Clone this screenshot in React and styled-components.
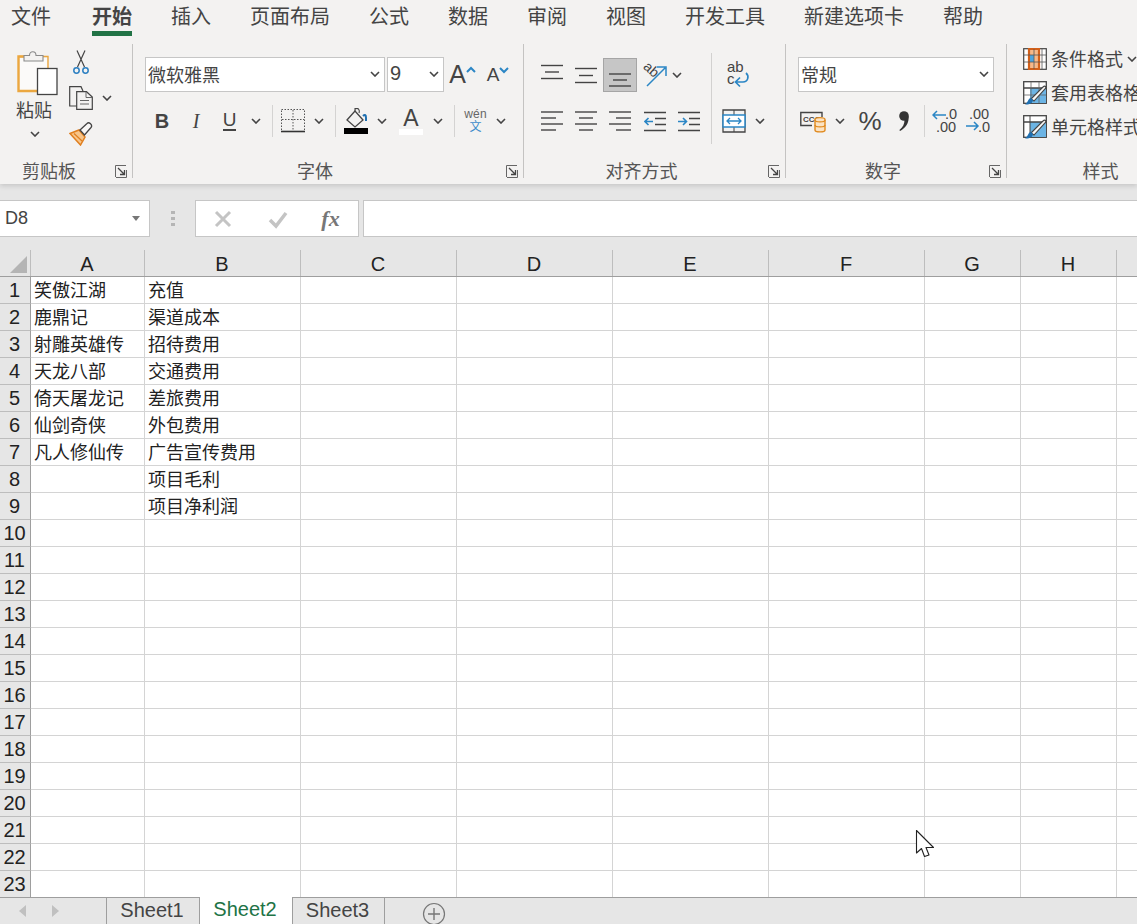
import React from "react";
import styled, { createGlobalStyle } from "styled-components";

const Global = createGlobalStyle`
  html, body { margin: 0; padding: 0; background: #fff; }
  #root { width: 1137px; height: 924px; overflow: hidden; }
`;
const CJK = `"Noto Sans CJK SC", "Noto Sans", sans-serif`;
const LAT = `"Liberation Sans", "Noto Sans CJK SC", sans-serif`;

const Page = styled.div`
  position: relative; width: 1137px; height: 924px; overflow: hidden;
  display: flex; flex-direction: column; background: #e6e6e6; font-family: ${CJK}; color: #444;
`;
const Ribbon = styled.header`
  height: 184px; flex: none; background: #f3f2f1; position: relative; z-index: 2;
  box-shadow: 0 2px 5px rgba(0,0,0,.14);
`;
const TabBar = styled.nav`display: flex; gap: 39px; padding-left: 11px; height: 36px; margin-bottom: 8px;`;
const Tab = styled.div`
  font-size: 20px; line-height: 31px; height: 31px; border-bottom: 5px solid ${p => p.$active ? "#217346" : "transparent"};
  font-weight: ${p => p.$active ? 700 : 400}; color: #444; white-space: nowrap;
  margin-left: ${p => p.$active ? 2 : 0}px;
`;
const Groups = styled.div`display: flex; align-items: flex-start;`;
const Divider = styled.div`width: 1px; height: 134px; background: #c4c3c2; flex: none;`;
const Group = styled.section`
  width: ${p => p.$w}px; height: 134px; flex: none; display: flex; flex-direction: column; position: relative;
`;
const Body = styled.div`flex: 1; min-height: 0; display: flex; padding: ${p => p.$pad || "13px 0 0 12px"};`;
const Rows = styled.div`display: flex; flex-direction: column; gap: 12px;`;
const Row = styled.div`display: flex; align-items: center; height: ${p => p.$h || 35}px;`;
const Footer = styled.footer`
  display: flex; align-items: center; height: 24px; margin-bottom: -5px; padding-right: 5px; flex: none;
`;
const GroupLabel = styled.div`
  flex: 1; text-align: center; font-size: 18px; line-height: 22px; height: 24px; color: #555;
  margin-right: ${p => p.$mr ?? 9}px; padding-left: ${p => p.$pl || 0}px;
`;
const SelectBox = styled.div`
  width: ${p => p.$w}px; height: 35px; box-sizing: border-box; background: #fff; border: 1px solid #c6c6c6;
  display: flex; align-items: center; justify-content: space-between; padding: 0 4px 2px 2px; margin-right: ${p => p.$mr || 0}px;
  font-size: ${p => p.$lat ? 20 : 18}px; font-family: ${p => p.$lat ? LAT : CJK}; color: #444; flex: none;
`;
const Tool = styled.div`
  width: ${p => p.$w}px; height: 34px; flex: none; display: flex; align-items: center; justify-content: center;
  color: #444; font-family: ${LAT}; font-size: 20px;
`;
const HighTool = styled(Tool)`
  background: #c6c6c6; border: 1px solid #a5a5a5; box-sizing: border-box; height: 34px;
`;
const BoldMark = styled.span`font-weight: 700;`;
const ItalicMark = styled.span`font-family: "Liberation Serif", serif; font-style: italic;`;
const UnderMark = styled.span`border-bottom: 2px solid #444; line-height: 18px; font-size: 19px;`;
const Grow = styled.span`font-size: ${p => p.$s}px; line-height: 1; color: #444; font-family: ${LAT};`;
const ToolSep = styled.div`
  width: 1px; height: 32px; background: #d4d3d2; margin-left: ${p => p.$ml}px; flex: none;
`;
const TallSep = styled.div`width: 1px; height: 91px; margin: -4px 0 0 5px; background: #d2d1d0; flex: none;`;
const PhoneticBox = styled.div`display: flex; flex-direction: column; align-items: center; line-height: 13px;`;
const WenTop = styled.span`font-size: 12px; color: #666; font-family: ${LAT}; letter-spacing: .2px;`;
const WenBot = styled.span`font-size: 12px; color: #3c8ccb;`;
const ColorA = styled.div`display: flex; flex-direction: column; align-items: center; width: 24px;`;
const ColorGlyph = styled.span`font-size: 23px; line-height: 22px; font-family: ${LAT}; color: #444;`;
const ColorBar = styled.span`width: 24px; height: 6px; background: ${p => p.$c};`;
const PasteCol = styled.div`width: 42px; margin-left: 14px; display: flex; flex-direction: column; align-items: center; flex: none;`;
const PasteText = styled.div`font-size: 18px; line-height: 24px; margin: 1px 2px 0 0; color: #444; white-space: nowrap;`;
const PasteChevron = styled.div`margin-top: 10px; height: 8px; display: flex;`;
const SmallCol = styled.div`margin-left: 13px; display: flex; flex-direction: column; gap: 12px;`;
const SmallRow = styled.div`display: flex; align-items: center; height: 24px;`;
const ChevGap = styled.div`display: flex; margin-left: 9px;`;
const StyleRow = styled.div`display: flex; align-items: center; height: 34px; gap: 4px; font-size: 18px; line-height: 32px; color: #444; white-space: nowrap;`;
const StyleText = styled.span`margin-top: -2px;`;
const StyleRows = styled.div`display: flex; flex-direction: column; margin-top: -2px;`;
const RightBlock = styled.div`display: flex; flex-direction: column; gap: 12px; padding-left: 13px;`;
const WrapRow = styled(Row)`margin-left: 1px;`;
const MergeRow = styled(Row)`margin-left: -3px;`;

const FormulaBar = styled.div`
  height: 66px; flex: none; background: #e6e6e6; display: flex; align-items: flex-start; padding-top: 16px; box-sizing: border-box;
`;
const NameBox = styled.div`
  width: 150px; height: 37px; box-sizing: border-box; background: #fff; border: 1px solid #c6c6c6; border-left: 0;
  display: flex; align-items: center; justify-content: space-between; padding: 0 9px 0 5px; font: 18px ${LAT}; color: #444; flex: none;
`;
const Grip = styled.div`width: 45px; display: flex; justify-content: center; align-items: center; height: 37px; flex: none;`;
const FxBox = styled.div`
  width: 164px; height: 37px; box-sizing: border-box; background: #fff; border: 1px solid #c6c6c6;
  display: flex; align-items: center; flex: none;
`;
const FxSlot = styled.div`width: ${p => p.$w}px; display: flex; justify-content: center; flex: none;`;
const FxText = styled.span`font: italic 700 22px "Liberation Serif", serif; color: #777;`;
const FormulaInput = styled.div`flex: 1; height: 37px; margin-left: 4px; box-sizing: border-box; background: #fff; border: 1px solid #c6c6c6; border-right: 0;`;

const Sheet = styled.div`flex: 1; min-height: 0; background: #fff; display: flex; flex-direction: column; overflow: hidden;`;
const HeaderRow = styled.div`display: flex; height: 27px; flex: none; background: #e6e6e6; border-bottom: 1px solid #9e9e9e; box-sizing: border-box;`;
const Corner = styled.div`width: 31px; flex: none; box-sizing: border-box; border-right: 1px solid #bdbdbd; display: flex; align-items: flex-end; padding: 0 0 3px 10px;`;
const ColHead = styled.div`
  width: ${p => p.$w}px; flex: none; box-sizing: border-box; border-right: 1px solid #bdbdbd; text-align: center;
  font: 20px/29px ${LAT}; color: #222; padding-right: 1px;
`;
const DataRow = styled.div`display: flex; height: 27px; flex: none;`;
const RowHead = styled.div`
  width: 31px; flex: none; box-sizing: border-box; background: #e6e6e6; border-right: 1px solid #9e9e9e; border-bottom: 1px solid #bdbdbd;
  text-align: center; font: 20px/27px ${LAT}; color: #222; padding-right: 1px;
`;
const Cell = styled.div`
  width: ${p => p.$w}px; height: 27px; flex: none; box-sizing: border-box; border-right: 1px solid #d4d4d4; border-bottom: 1px solid #d4d4d4;
  padding-left: 3px; font-size: 18px; line-height: 25px; color: #222; white-space: nowrap; overflow: visible;
`;

const SheetBar = styled.div`
  height: 27px; flex: none; box-sizing: border-box; background: #e6e6e6; border-top: 1px solid #9e9e9e; display: flex; align-items: flex-start;
`;
const NavArrows = styled.div`width: 106px; height: 26px; flex: none; display: flex; gap: 24px; padding-left: 19px; align-items: center; box-sizing: border-box;`;
const SheetTab = styled.div`
  height: ${p => p.$active ? 27 : 26}px; margin-top: ${p => p.$active ? -1 : 0}px; width: ${p => p.$w}px; box-sizing: border-box; flex: none;
  background: ${p => p.$active ? "#fff" : "#e6e6e6"}; color: ${p => p.$active ? "#217346" : "#444"};
  border-right: 1px solid #9e9e9e; border-left: ${p => p.$first ? "1px solid #9e9e9e" : "0"};
  text-align: center; font: 20px/25px ${LAT}; padding-right: 2px;
`;
const AddSheet = styled.div`margin-left: 37px; margin-top: 4px; display: flex;`;
const Cursor = styled.svg`position: absolute; left: 915px; top: 829px; z-index: 5;`;

const Chev = ({ w = 10 }) => (
  <svg width={w} height="6" viewBox="0 0 10 6" style={{ flex: "none" }}><path d="M1 1l4 4 4-4" fill="none" stroke="#444" strokeWidth="1.6" /></svg>
);
const Launcher = () => (
  <svg width="12" height="13" viewBox="0 0 12 13" style={{ flex: "none" }}>
    <path d="M11.5 5V12.5H1M.5 12V.5H11" fill="none" stroke="#666" strokeWidth="1" />
    <path d="M3 3l6 6M9.5 5v4.500H5" fill="none" stroke="#444" strokeWidth="1.3" />
  </svg>
);
const Lines = ({ ys, short = [], blue }) => (
  <svg width="22" height="24" viewBox="0 0 22 24">
    {ys.map((y, i) => <path key={i} d={`M${short.includes(i) ? (blue === "c" ? 4 : blue === "r" ? 7 : 0) : 0} ${y}H${short.includes(i) ? (blue === "c" ? 18 : blue === "r" ? 22 : 15) : 22}`} stroke="#444" strokeWidth="1.4" />)}
  </svg>
);
const Indent = ({ right }) => (
  <svg width="22" height="24" viewBox="0 0 22 24">
    <path d="M0 3.500H22M11 9.500H22M11 15.500H22M0 21.500H22" stroke="#444" strokeWidth="1.4" />
    {right
      ? <path d="M0 12.500H8M5 9l3.500 3.500L5 16" fill="none" stroke="#2b86c5" strokeWidth="1.6" />
      : <path d="M9 12.500H1M4.500 9L1 12.500 4.500 16" fill="none" stroke="#2b86c5" strokeWidth="1.6" />}
  </svg>
);
const PasteIcon = () => (
  <svg width="42" height="46" viewBox="0 0 42 46" style={{ alignSelf: "flex-start", marginLeft: 3, flex: "none" }}>
    <path d="M3 8H30V18H20V40H3Z" fill="#fbfaf9" stroke="none" />
    <path d="M8 6.500H1.500V41H20" fill="none" stroke="#eba73f" strokeWidth="2.400" />
    <path d="M2 6.500H31V18" fill="none" stroke="#eba73f" strokeWidth="1.4" />
    <path d="M7 11V5.500H12.500C12.500 .5 19 .5 19 5.500H26V11Z" fill="#f3f2f1" stroke="#8a8a8a" strokeWidth="1.1" />
    <rect x="20.500" y="18.500" width="19.500" height="26" fill="#fff" stroke="#444" strokeWidth="1.3" />
  </svg>
);
const CutIcon = () => (
  <svg width="16" height="25" viewBox="0 0 16 25" style={{ marginLeft: 4 }}>
    <path d="M12 .5L4.500 17M4 .5L11.500 17" stroke="#444" strokeWidth="1.2" fill="none" />
    <circle cx="3.500" cy="20.500" r="2.700" fill="none" stroke="#2b7fc1" strokeWidth="1.500" />
    <circle cx="12.500" cy="20.500" r="2.700" fill="none" stroke="#2b7fc1" strokeWidth="1.500" />
  </svg>
);
const CopyIcon = () => (
  <svg width="24" height="24" viewBox="0 0 24 24">
    <path d="M8 20H.7V.7H12L14 5" fill="none" stroke="#444" strokeWidth="1.2" />
    <path d="M7.700 5.700H17.500L23.300 11V23.300H7.700Z" fill="#f3f2f1" stroke="#444" strokeWidth="1.2" />
    <path d="M17 6V11.500H23M11 14.500H20M11 18H20" fill="none" stroke="#666" strokeWidth="1" />
  </svg>
);
const BrushIcon = () => (
  <svg width="24" height="24" viewBox="0 0 24 24">
    <path d="M1 11.500L10 8L16 15L11.500 23Z" fill="#f7c58a" stroke="#e07f1f" strokeWidth="1.500" />
    <path d="M5 11.500L13 19" stroke="#e07f1f" strokeWidth="1.200" />
    <path d="M11 8L18 1.500C20 -.5 24 3 22 5.500L15.500 13Z" fill="#f8f7f6" stroke="#444" strokeWidth="1.300" />
  </svg>
);
const BorderIcon = () => (
  <svg width="24" height="24" viewBox="0 0 24 24">
    <path d="M.5.5H23.500V21M.5 21V.5M12 1V21M1 10.500H23" fill="none" stroke="#555" strokeWidth="1" strokeDasharray="1.500 1.500" />
    <path d="M0 22.500H24" stroke="#333" strokeWidth="1.600" />
  </svg>
);
const FillIcon = () => (
  <svg width="24" height="26" viewBox="0 0 24 26">
    <path d="M3 12L11 3L19 12L11 19Z" fill="#f3f2f1" stroke="#444" strokeWidth="1.300" />
    <path d="M11 3V0M11 1c3-2 5 1 4 4" fill="none" stroke="#444" strokeWidth="1.100" />
    <path d="M19 8c2-2 3-1 3 2v3" fill="none" stroke="#1f6fb0" strokeWidth="2" />
    <rect x="0" y="20" width="24" height="6" fill="#000" />
  </svg>
);
const OrientIcon = () => (
  <svg width="26" height="26" viewBox="0 0 26 26" style={{ overflow: "visible" }}>
    <g transform="rotate(42 7 9)"><text x="0" y="11" fontSize="14" fontFamily="Liberation Sans" fill="#444">ab</text></g>
    <path d="M5 24L23 6M15 5H24V14" fill="none" stroke="#2b86c5" strokeWidth="1.500" />
  </svg>
);
const WrapIcon = () => (
  <svg width="24" height="26" viewBox="0 0 24 26" style={{ overflow: "visible" }}>
    <text x="1" y="10" fontSize="15" fontFamily="Liberation Sans" fill="#444">ab</text>
    <text x="1" y="22" fontSize="15" fontFamily="Liberation Sans" fill="#444">c</text>
    <path d="M20 11C23.500 14 22 20 17 20H10M14 15.500L9.500 20L14 24.500" fill="none" stroke="#2b86c5" strokeWidth="1.700" />
  </svg>
);
const MergeIcon = () => (
  <svg width="24" height="24" viewBox="0 0 24 24">
    <path d="M1 1H23V23H1Z" fill="none" stroke="#444" strokeWidth="1.300" />
    <path d="M12 1V6M12 18V23" stroke="#444" strokeWidth="1" />
    <path d="M1 6H23V18H1Z" fill="#fff" stroke="#2b86c5" strokeWidth="1.500" />
    <path d="M5 12H19M8 9L5 12 8 15M16 9L19 12 16 15" fill="none" stroke="#2b86c5" strokeWidth="1.300" />
  </svg>
);
const AccountIcon = () => (
  <svg width="26" height="24" viewBox="0 0 26 24">
    <path d="M12 16.500H.8V3.500H22V8" fill="none" stroke="#444" strokeWidth="1.400" />
    <text x="3" y="13" fontSize="8" fontWeight="700" fontFamily="Liberation Sans" fill="#444">CCC</text>
    <path d="M15 10.500C15 8 25 8 25 10.500V21C25 23.500 15 23.500 15 21Z" fill="#fbe3c4" stroke="#e08a1e" strokeWidth="1.400" />
    <path d="M15 11C15 13.500 25 13.500 25 11M15 16C15 18.500 25 18.500 25 16" fill="none" stroke="#e08a1e" strokeWidth="1.300" />
  </svg>
);
const CommaIcon = () => (
  <svg width="14" height="22" viewBox="0 0 14 22">
    <circle cx="7" cy="6" r="4.800" fill="#333" />
    <path d="M11.500 6C12.500 13 8 18.500 3 21L2.400 20C6 17 7.500 14 7.500 10Z" fill="#333" />
  </svg>
);
const DecIcon = ({ more }) => (
  <svg width="26" height="26" viewBox="0 0 26 26">
    {more ? (
      <>
        <text x="4" y="11" fontSize="14.500" fontFamily="Liberation Sans" fill="#444">.00</text>
        <text x="13" y="24" fontSize="14.500" fontFamily="Liberation Sans" fill="#444">.0</text>
        <path d="M1 18H13M9 14l4 4-4 4" fill="none" stroke="#2b86c5" strokeWidth="1.500" />
      </>
    ) : (
      <>
        <text x="13" y="11" fontSize="14.500" fontFamily="Liberation Sans" fill="#444">.0</text>
        <text x="4" y="24" fontSize="14.500" fontFamily="Liberation Sans" fill="#444">.00</text>
        <path d="M14 7H1M5 3L1 7l4 4" fill="none" stroke="#2b86c5" strokeWidth="1.500" />
      </>
    )}
  </svg>
);
const CondIcon = () => (
  <svg width="24" height="22" viewBox="0 0 24 22">
    <rect x=".7" y=".7" width="22.600" height="20.600" fill="#fff" stroke="#444" strokeWidth="1.200" />
    <rect x="6" y="1" width="10" height="20" fill="#f6b98a" />
    <path d="M6 1V21H16V1Z" fill="none" stroke="#d2601a" strokeWidth="2.200" />
    <rect x="7" y="7" width="4" height="7" fill="#4ea5de" />
    <path d="M1 7H23M1 14H23M11 1V21M19 1V21" stroke="#555" strokeWidth=".8" fill="none" />
  </svg>
);
const TableStyleIcon = ({ plain }) => (
  <svg width="24" height="24" viewBox="0 0 24 24">
    <rect x=".7" y=".7" width="22.600" height="21.600" fill="#fff" stroke="#444" strokeWidth="1.300" />
    <path d="M7 7H23V22H7Z" fill="#6cb4e4" />
    <path d="M1 7H23" stroke="#444" strokeWidth="1.500" />
    {!plain && <path d="M1 14H23M8 1V22M16 1V22" stroke="#666" strokeWidth=".8" />}
    {plain && <path d="M7 1V22" stroke="#444" strokeWidth="1" />}
    <path d="M8 18L20 6C22 4 24 6 22 8L11 20Z" fill="#f8f7f6" stroke="#444" strokeWidth="1.100" />
    <path d="M2 23.500C6 24 10 22 10 19L8 17C5 17 5 22 2 23.500Z" fill="#1f6fb0" />
  </svg>
);
const Caret = ({ down }) => (
  <svg width="10" height="7" viewBox="0 0 10 7" style={{ alignSelf: "flex-start", marginTop: down ? 9 : 8, flex: "none" }}>
    <path d={down ? "M1 1l4 4 4-4" : "M1 6l4-4 4 4"} fill="none" stroke="#2b86c5" strokeWidth="2" />
  </svg>
);

const tabs = ["文件", "开始", "插入", "页面布局", "公式", "数据", "审阅", "视图", "开发工具", "新建选项卡", "帮助"];
const cols = [["A", 114], ["B", 156], ["C", 156], ["D", 156], ["E", 156], ["F", 156], ["G", 96], ["H", 96], ["", 30]];
const colA = ["笑傲江湖", "鹿鼎记", "射雕英雄传", "天龙八部", "倚天屠龙记", "仙剑奇侠", "凡人修仙传"];
const colB = ["充值", "渠道成本", "招待费用", "交通费用", "差旅费用", "外包费用", "广告宣传费用", "项目毛利", "项目净利润"];

export default function App() {
  return (
    <Page>
      <Global />
      <Ribbon>
        <TabBar>{tabs.map((t, i) => <Tab key={t} $active={i === 1}>{t}</Tab>)}</TabBar>
        <Groups>
          <Group $w={132}>
            <Body $pad="6px 0 0 0">
              <PasteCol>
                <PasteIcon />
                <PasteText>粘贴</PasteText>
                <PasteChevron><Chev /></PasteChevron>
              </PasteCol>
              <SmallCol>
                <SmallRow><CutIcon /></SmallRow>
                <SmallRow><CopyIcon /><ChevGap><Chev /></ChevGap></SmallRow>
                <SmallRow><BrushIcon /></SmallRow>
              </SmallCol>
            </Body>
            <Footer><GroupLabel $mr={17}>剪贴板</GroupLabel><Launcher /></Footer>
          </Group>
          <Divider />
          <Group $w={390}>
            <Body>
              <Rows>
                <Row>
                  <SelectBox $w={240} $mr={2}>微软雅黑<Chev /></SelectBox>
                  <SelectBox $w={57} $lat>9<Chev /></SelectBox>
                  <Tool $w={37}><Grow $s={25}>A</Grow><Caret /></Tool>
                  <Tool $w={34}><Grow $s={19}>A</Grow><Caret down /></Tool>
                </Row>
                <Row $h={34}>
                  <Tool $w={34}><BoldMark>B</BoldMark></Tool>
                  <Tool $w={34}><ItalicMark>I</ItalicMark></Tool>
                  <Tool $w={33}><UnderMark>U</UnderMark></Tool>
                  <Tool $w={20}><Chev /></Tool>
                  <ToolSep $ml={6} />
                  <Tool $w={39}><BorderIcon /></Tool>
                  <Tool $w={14}><Chev /></Tool>
                  <ToolSep $ml={9} />
                  <Tool $w={40}><FillIcon /></Tool>
                  <Tool $w={12}><Chev /></Tool>
                  <Tool $w={46}><ColorA><ColorGlyph>A</ColorGlyph><ColorBar $c="#fff" /></ColorA></Tool>
                  <Tool $w={8}><Chev /></Tool>
                  <ToolSep $ml={12} />
                  <Tool $w={41}><PhoneticBox><WenTop>wén</WenTop><WenBot>文</WenBot></PhoneticBox></Tool>
                  <Tool $w={10}><Chev /></Tool>
                </Row>
              </Rows>
            </Body>
            <Footer><GroupLabel>字体</GroupLabel><Launcher /></Footer>
          </Group>
          <Divider />
          <Group $w={261}>
            <Body $pad="13px 0 0 11px">
              <Rows>
                <Row>
                  <Tool $w={34}><Lines ys={[2.5, 9, 15.5]} short={[1]} blue="c" /></Tool>
                  <Tool $w={34}><Lines ys={[5.5, 12.5, 19.5]} short={[1]} blue="c" /></Tool>
                  <HighTool $w={34}><Lines ys={[11, 17, 23]} short={[1]} blue="c" /></HighTool>
                  <Tool $w={36}><OrientIcon /></Tool>
                  <Tool $w={8}><Chev /></Tool>
                </Row>
                <Row $h={34}>
                  <Tool $w={34}><Lines ys={[3, 9, 15, 21]} short={[1, 3]} /></Tool>
                  <Tool $w={34}><Lines ys={[3, 9, 15, 21]} short={[1, 3]} blue="c" /></Tool>
                  <Tool $w={34}><Lines ys={[3, 9, 15, 21]} short={[1, 3]} blue="r" /></Tool>
                  <Tool $w={35}><Indent /></Tool>
                  <Tool $w={34}><Indent right /></Tool>
                </Row>
              </Rows>
              <TallSep />
              <RightBlock>
                <WrapRow><WrapIcon /></WrapRow>
                <MergeRow $h={34}><Tool $w={24}><MergeIcon /></Tool><Tool $w={28}><Chev /></Tool></MergeRow>
              </RightBlock>
            </Body>
            <Footer><GroupLabel>对齐方式</GroupLabel><Launcher /></Footer>
          </Group>
          <Divider />
          <Group $w={220}>
            <Body>
              <Rows>
                <Row><SelectBox $w={196}>常规<Chev /></SelectBox></Row>
                <Row $h={34}>
                  <Tool $w={30}><AccountIcon /></Tool>
                  <Tool $w={24}><Chev /></Tool>
                  <Tool $w={36}><Grow $s={26}>%</Grow></Tool>
                  <Tool $w={32}><CommaIcon /></Tool>
                  <ToolSep $ml={4} />
                  <Tool $w={40}><DecIcon /></Tool>
                  <Tool $w={26}><DecIcon more /></Tool>
                </Row>
              </Rows>
            </Body>
            <Footer><GroupLabel>数字</GroupLabel><Launcher /></Footer>
          </Group>
          <Divider />
          <Group $w={190}>
            <Body $pad="0 0 0 16px">
              <StyleRows>
                <StyleRow><CondIcon /><StyleText>条件格式</StyleText><Chev /></StyleRow>
                <StyleRow><TableStyleIcon /><StyleText>套用表格格式</StyleText></StyleRow>
                <StyleRow><TableStyleIcon plain /><StyleText>单元格样式</StyleText></StyleRow>
              </StyleRows>
            </Body>
            <Footer><GroupLabel $mr={0} $pl={2}>样式</GroupLabel></Footer>
          </Group>
        </Groups>
      </Ribbon>
      <FormulaBar>
        <NameBox>D8
          <svg width="8" height="5" viewBox="0 0 8 5"><path d="M0 0H8L4 5Z" fill="#777" /></svg>
        </NameBox>
        <Grip><svg width="4" height="15" viewBox="0 0 4 15"><path d="M0 0h4v3H0zM0 6h4v3H0zM0 12h4v3H0z" fill="#b5b5b5" /></svg></Grip>
        <FxBox>
          <FxSlot $w={54}><svg width="20" height="20" viewBox="0 0 20 20"><path d="M3 3L17 17M17 3L3 17" stroke="#c4c4c4" strokeWidth="3" /></svg></FxSlot>
          <FxSlot $w={55}><svg width="20" height="20" viewBox="0 0 20 20"><path d="M2 11L8 17L18 4" fill="none" stroke="#c4c4c4" strokeWidth="3.500" /></svg></FxSlot>
          <FxSlot $w={51}><FxText>fx</FxText></FxSlot>
        </FxBox>
        <FormulaInput />
      </FormulaBar>
      <Sheet>
        <HeaderRow>
          <Corner><svg width="17" height="17" viewBox="0 0 17 17"><path d="M17 0V17H0Z" fill="#b4b4b4" /></svg></Corner>
          {cols.map(([c, w], i) => <ColHead key={i} $w={w}>{c}</ColHead>)}
        </HeaderRow>
        {Array.from({ length: 23 }, (_, r) => (
          <DataRow key={r}>
            <RowHead>{r + 1}</RowHead>
            {cols.map(([, w], c) => (
              <Cell key={c} $w={w}>{c === 0 ? colA[r] : c === 1 ? colB[r] : ""}</Cell>
            ))}
          </DataRow>
        ))}
      </Sheet>
      <SheetBar>
        <NavArrows>
          <svg width="8" height="12" viewBox="0 0 8 12"><path d="M7 0V12L0 6Z" fill="#c0c0c0" /></svg>
          <svg width="8" height="12" viewBox="0 0 8 12"><path d="M1 0V12L8 6Z" fill="#c0c0c0" /></svg>
        </NavArrows>
        <SheetTab $first $w={94}>Sheet1</SheetTab>
        <SheetTab $active $w={93}>Sheet2</SheetTab>
        <SheetTab $w={92}>Sheet3</SheetTab>
        <AddSheet>
          <svg width="24" height="24" viewBox="0 0 24 24"><circle cx="12" cy="12" r="10.500" fill="none" stroke="#777" strokeWidth="1.200" /><path d="M12 6V18M6 12H18" stroke="#777" strokeWidth="1.400" /></svg>
        </AddSheet>
      </SheetBar>
      <Cursor width="20" height="29" viewBox="0 0 20 29">
        <path d="M1.500 1.500V24L6.500 19.500L9.500 27.500L14 26L11 18.500H18.500Z" fill="#fff" stroke="#222" strokeWidth="1.100" strokeLinejoin="round" />
      </Cursor>
    </Page>
  );
}
